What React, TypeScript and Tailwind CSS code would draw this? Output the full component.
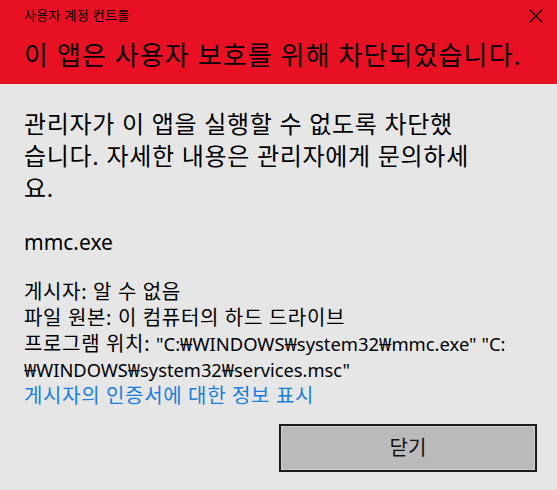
const font = { fontFamily: '"Noto Sans", "Noto Sans CJK KR", sans-serif' }

export default function App() {
  const bodyLines = [
    '관리자가 이 앱을 실행할 수 없도록 차단했',
    '습니다. 자세한 내용은 관리자에게 문의하세',
    '요.',
  ]

  return (
    <div className="w-[557px] h-[490px] bg-[#e6e6e6] text-black flex flex-col" style={font}>
      {/* Red banner */}
      <div className="h-[84px] bg-[#e81123] px-6 flex flex-col">
        <div className="flex items-start justify-between pt-[5px]">
          <span className="text-[13px] leading-[20px] tracking-[0.3px]">사용자 계정 컨트롤</span>
          <svg width="14" height="14" viewBox="0 0 14 14" className="mt-[4px] -mr-[10px]">
            <path d="M0.5 0.5 L13.5 13.5 M13.5 0.5 L0.5 13.5" stroke="#000" strokeWidth="1.1" fill="none" />
          </svg>
        </div>
        <h1 className="mt-[14px] text-[26px] leading-[32px] tracking-[1.1px] font-normal whitespace-nowrap">
          이 앱은 사용자 보호를 위해 차단되었습니다.
        </h1>
      </div>

      {/* Content */}
      <div className="px-6 flex flex-col flex-1">
        <p className="mt-[24px] text-[24px] leading-[32px] tracking-[0.7px]">
          {bodyLines.map((line) => (
            <span key={line} className="block whitespace-nowrap">{line}</span>
          ))}
        </p>

        <div className="mt-[24px] text-[21px] leading-[28px]">mmc.exe</div>

        <div className="mt-[23px] text-[20px] leading-[26px] tracking-[0.65px]">
          <div>게시자: 알 수 없음</div>
          <div>파일 원본: 이 컴퓨터의 하드 드라이브</div>
          <div className="whitespace-nowrap">
            프로그램 위치: <span className="text-[18.4px] tracking-normal">"C:₩WINDOWS₩system32₩mmc.exe" "C:</span>
          </div>
          <div className="whitespace-nowrap text-[18.3px] tracking-normal">₩WINDOWS₩system32₩services.msc"</div>
          <div className="text-[#1a7fd6]">게시자의 인증서에 대한 정보 표시</div>
        </div>

        <div className="flex justify-end mt-[15px] -mr-1">
          <button className="w-[258px] h-[48px] bg-[#bababa] border-2 border-[#1b1b1b] shadow-[inset_0_0_0_1px_#d2d2d2] text-[20px] text-[#111]">
            닫기
          </button>
        </div>
      </div>
    </div>
  )
}
